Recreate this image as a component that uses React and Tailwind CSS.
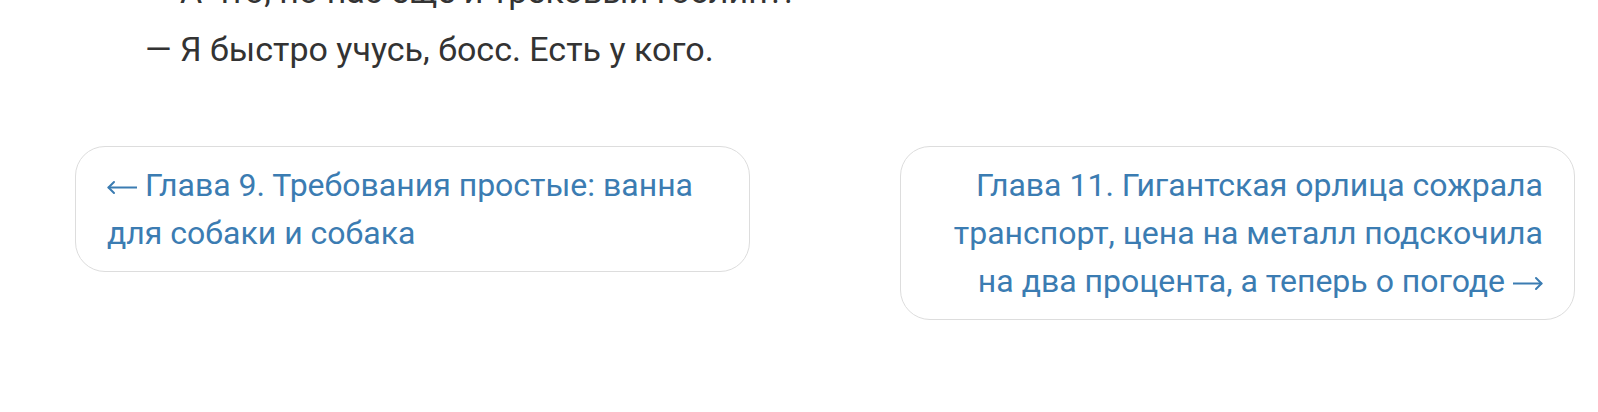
function ArrowLeft() {
  return (
    <svg width="30" height="18" viewBox="0 0 30 18" className="inline-block align-baseline" fill="none" stroke="currentColor" strokeWidth="2" strokeLinecap="round" strokeLinejoin="round">
      <path d="M1.5 9.5 H29.5" />
      <path d="M7 4 L1.5 9.5 L7 15" />
    </svg>
  );
}

function ArrowRight() {
  return (
    <svg width="30" height="18" viewBox="0 0 30 18" className="inline-block align-baseline" fill="none" stroke="currentColor" strokeWidth="2" strokeLinecap="round" strokeLinejoin="round">
      <path d="M0.5 9.5 H28.5" />
      <path d="M23 4 L28.5 9.5 L23 15" />
    </svg>
  );
}

export default function App() {
  return (
    <div className="w-[1598px] h-[412px] overflow-hidden bg-white" style={{ fontFamily: "Roboto, 'Noto Sans', sans-serif" }}>
      <div className="pl-[145px] text-[34px] leading-[51px] text-[#333333] -mt-[34px]">
        <p>— А что, по нас ещё и трековый гоблин?!</p>
        <p className="mt-[7px]">— Я быстро учусь, босс. Есть у кого.</p>
      </div>
      <div className="ml-[75px] w-[1500px] mt-[71px] flex justify-between items-start text-[32px] leading-[48px] text-[#3b7cb2]">
        <a className="w-[675px] rounded-[30px] border border-[#dddddd] px-[31px] py-[14px]">
          <ArrowLeft /> Глава 9. Требования простые: ванна для собаки и собака
        </a>
        <a className="w-[675px] rounded-[30px] border border-[#dddddd] px-[31px] py-[14px] text-right">
          Глава 11. Гигантская орлица сожрала транспорт, цена на металл подскочила на два процента, а теперь о погоде <ArrowRight />
        </a>
      </div>
    </div>
  );
}
